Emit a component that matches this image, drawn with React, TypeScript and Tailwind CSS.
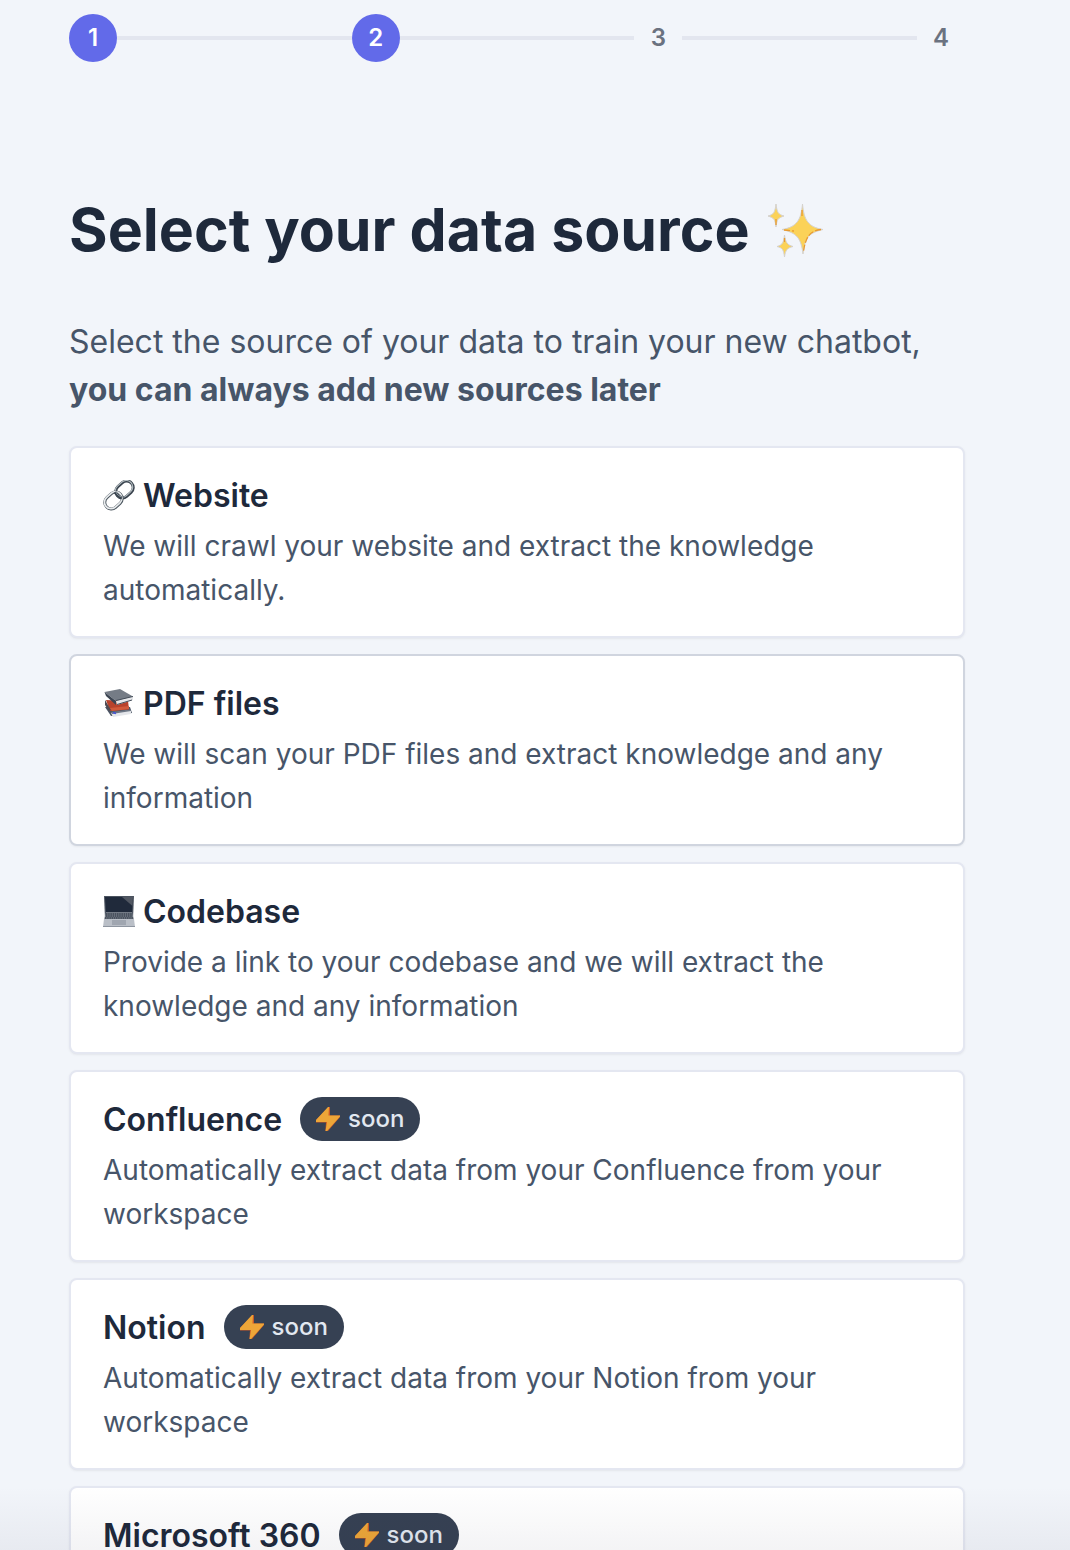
import React from "react";

function Sparkles() {
  return (
    <svg viewBox="0 0 60 60" className="size-15 shrink-0" aria-hidden="true">
      <g fill="#fbd258" stroke="#d5d2cf" strokeWidth="1">
        <path d="M36.500 4C38 20 42 27 57 29.500C42 33 39 38 37 54C35 38 31 33 16 29.500C31 27 35 20 36.500 4Z" />
        <path d="M10 4C11 12 12 14.500 18 16C12 18 11 19 10 27C9 19 8 18 2 16C8 14.500 9 12 10 4Z" />
        <path d="M18.500 35C19.500 42 21 45 27 46.500C21 48 19.500 50 18.500 57C17.500 50 17 48 11 46.500C17 45 17.500 42 18.500 35Z" />
      </g>
      <path d="M55 29.500C44 31 40 36 37.500 51M36 10V18M18 30L28 31M10 19V25M18.500 38V42" fill="none" stroke="#e99a30" strokeWidth="1.300" strokeDasharray="6 2" />
    </svg>
  );
}

function LinkIcon() {
  return (
    <svg viewBox="0 0 32 32" className="size-8 shrink-0" aria-hidden="true">
      <g fill="none">
        <rect x="-9.500" y="-6.500" width="19" height="13" rx="6.500" transform="translate(21.500 9.500) rotate(-42)" stroke="#39434e" strokeWidth="3" />
        <rect x="-9.500" y="-6.500" width="19" height="13" rx="6.500" transform="translate(21 9) rotate(-42)" stroke="#b4bdc1" strokeWidth="1.200" />
        <rect x="-9.500" y="-6.500" width="19" height="13" rx="6.500" transform="translate(10.500 20.500) rotate(-42)" stroke="#4b555e" strokeWidth="3" />
        <rect x="-9.500" y="-6.500" width="19" height="13" rx="6.500" transform="translate(10.200 20.200) rotate(-42)" stroke="#e8ebed" strokeWidth="1.700" />
        <path d="M12 12C14 15 16 17 19 18" stroke="#39434e" strokeWidth="3" />
        <path d="M13 12C14 15 16 16 19 17" stroke="#8b969d" strokeWidth="1" />
      </g>
    </svg>
  );
}

function BooksIcon() {
  return (
    <svg viewBox="0 0 32 32" className="size-8 shrink-0" aria-hidden="true">
      <path d="M2 19L8 28L29 25L27 19Z" fill="#4b5565" />
      <path d="M8 25L28 22V26L10 29Z" fill="#e4e6ea" />
      <path d="M8 24L28 21.500V23L9 26Z" fill="#6e7785" />
      <path d="M10 24.500L13 25.500" stroke="#4252dc" strokeWidth="1.800" />
      <path d="M3 12L7 23L26 21.500L25 13Z" fill="#b8432d" />
      <path d="M2 12L8 22L6 23L2 17Z" fill="#4f4b53" />
      <path d="M7 20L26 18V21L9 23Z" fill="#d25a3b" />
      <path d="M1.500 4L17 1L30 8.500L13 13Z" fill="#757c86" />
      <path d="M1.500 4L13 13V17L3 8Z" fill="#3c4552" />
      <path d="M13 13L30 9V12L14 17Z" fill="#e5e7ea" />
      <path d="M13 12.500L30 8.500M14 16.500L29 12" stroke="#454e5a" strokeWidth="1" />
    </svg>
  );
}

function LaptopIcon() {
  return (
    <svg viewBox="0 0 32 32" className="size-8 shrink-0" aria-hidden="true">
      <path d="M1 0H31L30 23H2Z" fill="#4b535f" />
      <path d="M2 1H30L29 16H3Z" fill="#202a3b" />
      <path d="M19 1H30L29.500 10Z" fill="#515762" />
      <path d="M3 16H29L31 24H1Z" fill="#747b86" />
      <path d="M3 18H29M3 20H29M2 22H30" stroke="#3d4653" strokeWidth="1.400" strokeDasharray="1.500 .7" />
      <path d="M1 23H31L32 31H0Z" fill="#babfc7" />
      <path d="M9 24H23V29H9Z" fill="#a0a6b0" />
      <path d="M0 30.500H32" stroke="#8e95a0" />
    </svg>
  );
}

function Bolt() {
  return (
    <svg viewBox="0 0 24 24" className="size-6 shrink-0" aria-hidden="true">
      <path d="M14 0H12.500L0 13V15.500H10L9.500 22V24H12L24 10V8.500H14Z" fill="#c95a28" />
      <path d="M13 0H12L0 13V15H11L9.500 24H11L24 9.500V8.500H12.500Z" fill="#eda638" />
    </svg>
  );
}

type Source = {
  title: string;
  text: string;
  icon?: React.ReactNode;
  soon?: boolean;
  active?: boolean;
};

const sources: Source[] = [
  { title: "Website", icon: <LinkIcon />, text: "We will crawl your website and extract the knowledge automatically." },
  { title: "PDF files", icon: <BooksIcon />, active: true, text: "We will scan your PDF files and extract knowledge and any information" },
  { title: "Codebase", icon: <LaptopIcon />, text: "Provide a link to your codebase and we will extract the knowledge and any information" },
  { title: "Confluence", soon: true, text: "Automatically extract data from your Confluence from your workspace" },
  { title: "Notion", soon: true, text: "Automatically extract data from your Notion from your workspace" },
  { title: "Microsoft 360", soon: true, text: "Automatically extract data from your Microsoft 360 from your workspace" },
];

function Steps() {
  return (
    <ol className="flex items-center text-2xl font-semibold">
      {[1, 2, 3, 4].map((n) => (
        <li key={n} className={n > 1 ? "flex flex-1 items-center" : "flex items-center"}>
          {n > 1 && <span className="h-1 flex-1 bg-[#e3e6ef]" />}
          <span
            className={
              n < 3
                ? "flex size-12 items-center justify-center rounded-full bg-[#626ae9] text-white"
                : "flex size-12 items-center justify-center text-[#6b7280]"
            }
          >
            {n}
          </span>
        </li>
      ))}
    </ol>
  );
}

function SourceCard({ source }: { source: Source }) {
  return (
    <button
      type="button"
      className={
        source.active
          ? "w-full rounded-lg border-2 border-[#d0d5df] bg-white px-8 py-6 text-left shadow-xs"
          : "w-full rounded-lg border-2 border-[#e4e7f1] bg-white px-8 py-6 text-left shadow-sm shadow-black/5"
      }
    >
      <span className="flex h-12 items-center">
        {source.icon && <span className="mr-2">{source.icon}</span>}
        <span className="text-[32px] leading-12 font-semibold text-[#1e293b]">{source.title}</span>
        {source.soon && (
          <span className="mb-0.5 ml-[18px] flex h-11 items-center gap-2 rounded-full bg-[#364153] px-4 text-2xl font-medium text-[#e2e8f0]">
            <Bolt />
            soon
          </span>
        )}
      </span>
      <span className="mt-1 block text-[28px] leading-11 text-[#475569]">{source.text}</span>
    </button>
  );
}

export default function App() {
  return (
    <div className="relative h-screen overflow-hidden bg-[#f2f5fa] font-['Inter',sans-serif]">
      <main className="pt-3.5 pr-[105px] pl-[69px]">
        <Steps />
        <h1 className="mt-32 flex items-center gap-4 text-[59px] leading-20 font-bold text-[#1e293b]">
          Select your data source
          <Sparkles />
        </h1>
        <p className="mt-12 text-[32px] leading-12 text-[#475569]">
          Select the source of your data to train your new chatbot, <strong className="font-bold">you can always add new sources later</strong>
        </p>
        <div className="mt-8 flex flex-col gap-4">
          {sources.map((s) => (
            <SourceCard key={s.title} source={s} />
          ))}
        </div>
      </main>
      <div className="pointer-events-none absolute inset-x-0 bottom-0 h-16 bg-linear-to-t from-[#1e1e3c]/5 to-transparent" />
    </div>
  );
}
